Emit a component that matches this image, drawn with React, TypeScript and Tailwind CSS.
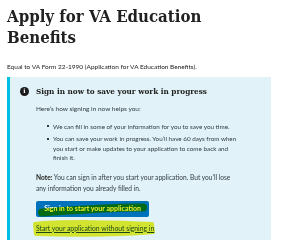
export default function App() {
  return (
    <div className="relative w-[300px] h-[252px] overflow-hidden bg-white text-[#212121] font-['Lato',sans-serif]">
      <div className="px-[7px] pt-[6px]">
        <h1 className="font-['DejaVu_Serif_Condensed','DejaVu_Serif',serif] font-bold text-[16.7px] leading-[21px]">
          Apply for VA Education
          <br />
          Benefits
        </h1>
        <p className="mt-[14px] text-[6.5px] leading-[9px]">
          Equal to VA Form 22-1990 (Application for VA Education Benefits).
        </p>

        <div className="relative mt-[6px] w-[264px] border-l-[3px] border-[#00bde3] bg-[#e1f3f8] pl-[10px] pr-[24px] pt-[8px] pb-[7px]">
          <div className="flex items-center gap-[7px]">
            <div className="flex h-[9px] w-[9px] shrink-0 items-center justify-center rounded-full bg-[#1b1b1b]">
              <span className="font-['DejaVu_Serif',serif] text-[6px] font-bold leading-none text-white">i</span>
            </div>
            <h2 className="font-['DejaVu_Serif_Condensed','DejaVu_Serif',serif] text-[8.1px] font-bold leading-[12px]">
              Sign in now to save your work in progress
            </h2>
          </div>

          <div className="pl-[16px] text-[6.3px] leading-[9.5px] text-[#323a45]">
            <p className="mt-[7px] text-[6.5px]">Here’s how signing in now helps you:</p>
            <ul className="mt-[8px] flex flex-col gap-[3px]">
              <li className="flex gap-[4px] pl-[11px]">
                <span className="mt-[3.5px] h-[2px] w-[2px] shrink-0 bg-[#323a45]" />
                <span>We can fill in some of your information for you to save you time.</span>
              </li>
              <li className="flex gap-[4px] pl-[11px]">
                <span className="mt-[3.5px] h-[2px] w-[2px] shrink-0 bg-[#323a45]" />
                <span>
                  You can save your work in progress. You’ll have 60 days from when
                  <br />
                  you start or make updates to your application to come back and
                  <br />
                  finish it.
                </span>
              </li>
            </ul>
            <p className="mt-[9px] text-[6.6px] leading-[11px]">
              <b className="text-[#212121]">Note:</b> You can sign in after you start your application. But you’ll lose
              <br />
              any information you already filled in.
            </p>
            <button className="mt-[7px] block h-[16px] w-[113px] rounded-[2px] bg-[#0071bb] text-[7px] font-bold text-white">
              Sign in to start your application
            </button>
            <p className="mt-[6px] text-[6.8px] leading-[10px]">
              <a className="text-[#1f4a7a] underline" href="#">
                Start your application without signing in
              </a>
            </p>
          </div>
        </div>
      </div>

      <svg className="pointer-events-none absolute left-0 top-0 mix-blend-multiply" width="300" height="252">
        <path d="M42 212.5 C75 210, 115 207, 143 207.5" stroke="#eef020" strokeWidth="8" fill="none" strokeLinecap="round" />
        <path
          d="M35 224 C60 221, 120 222, 152 224 L153 232 C110 236, 70 235, 36 234 Z"
          stroke="#eef030"
          strokeWidth="4"
          fill="#eef030"
          strokeLinejoin="round"
        />
      </svg>
    </div>
  )
}
